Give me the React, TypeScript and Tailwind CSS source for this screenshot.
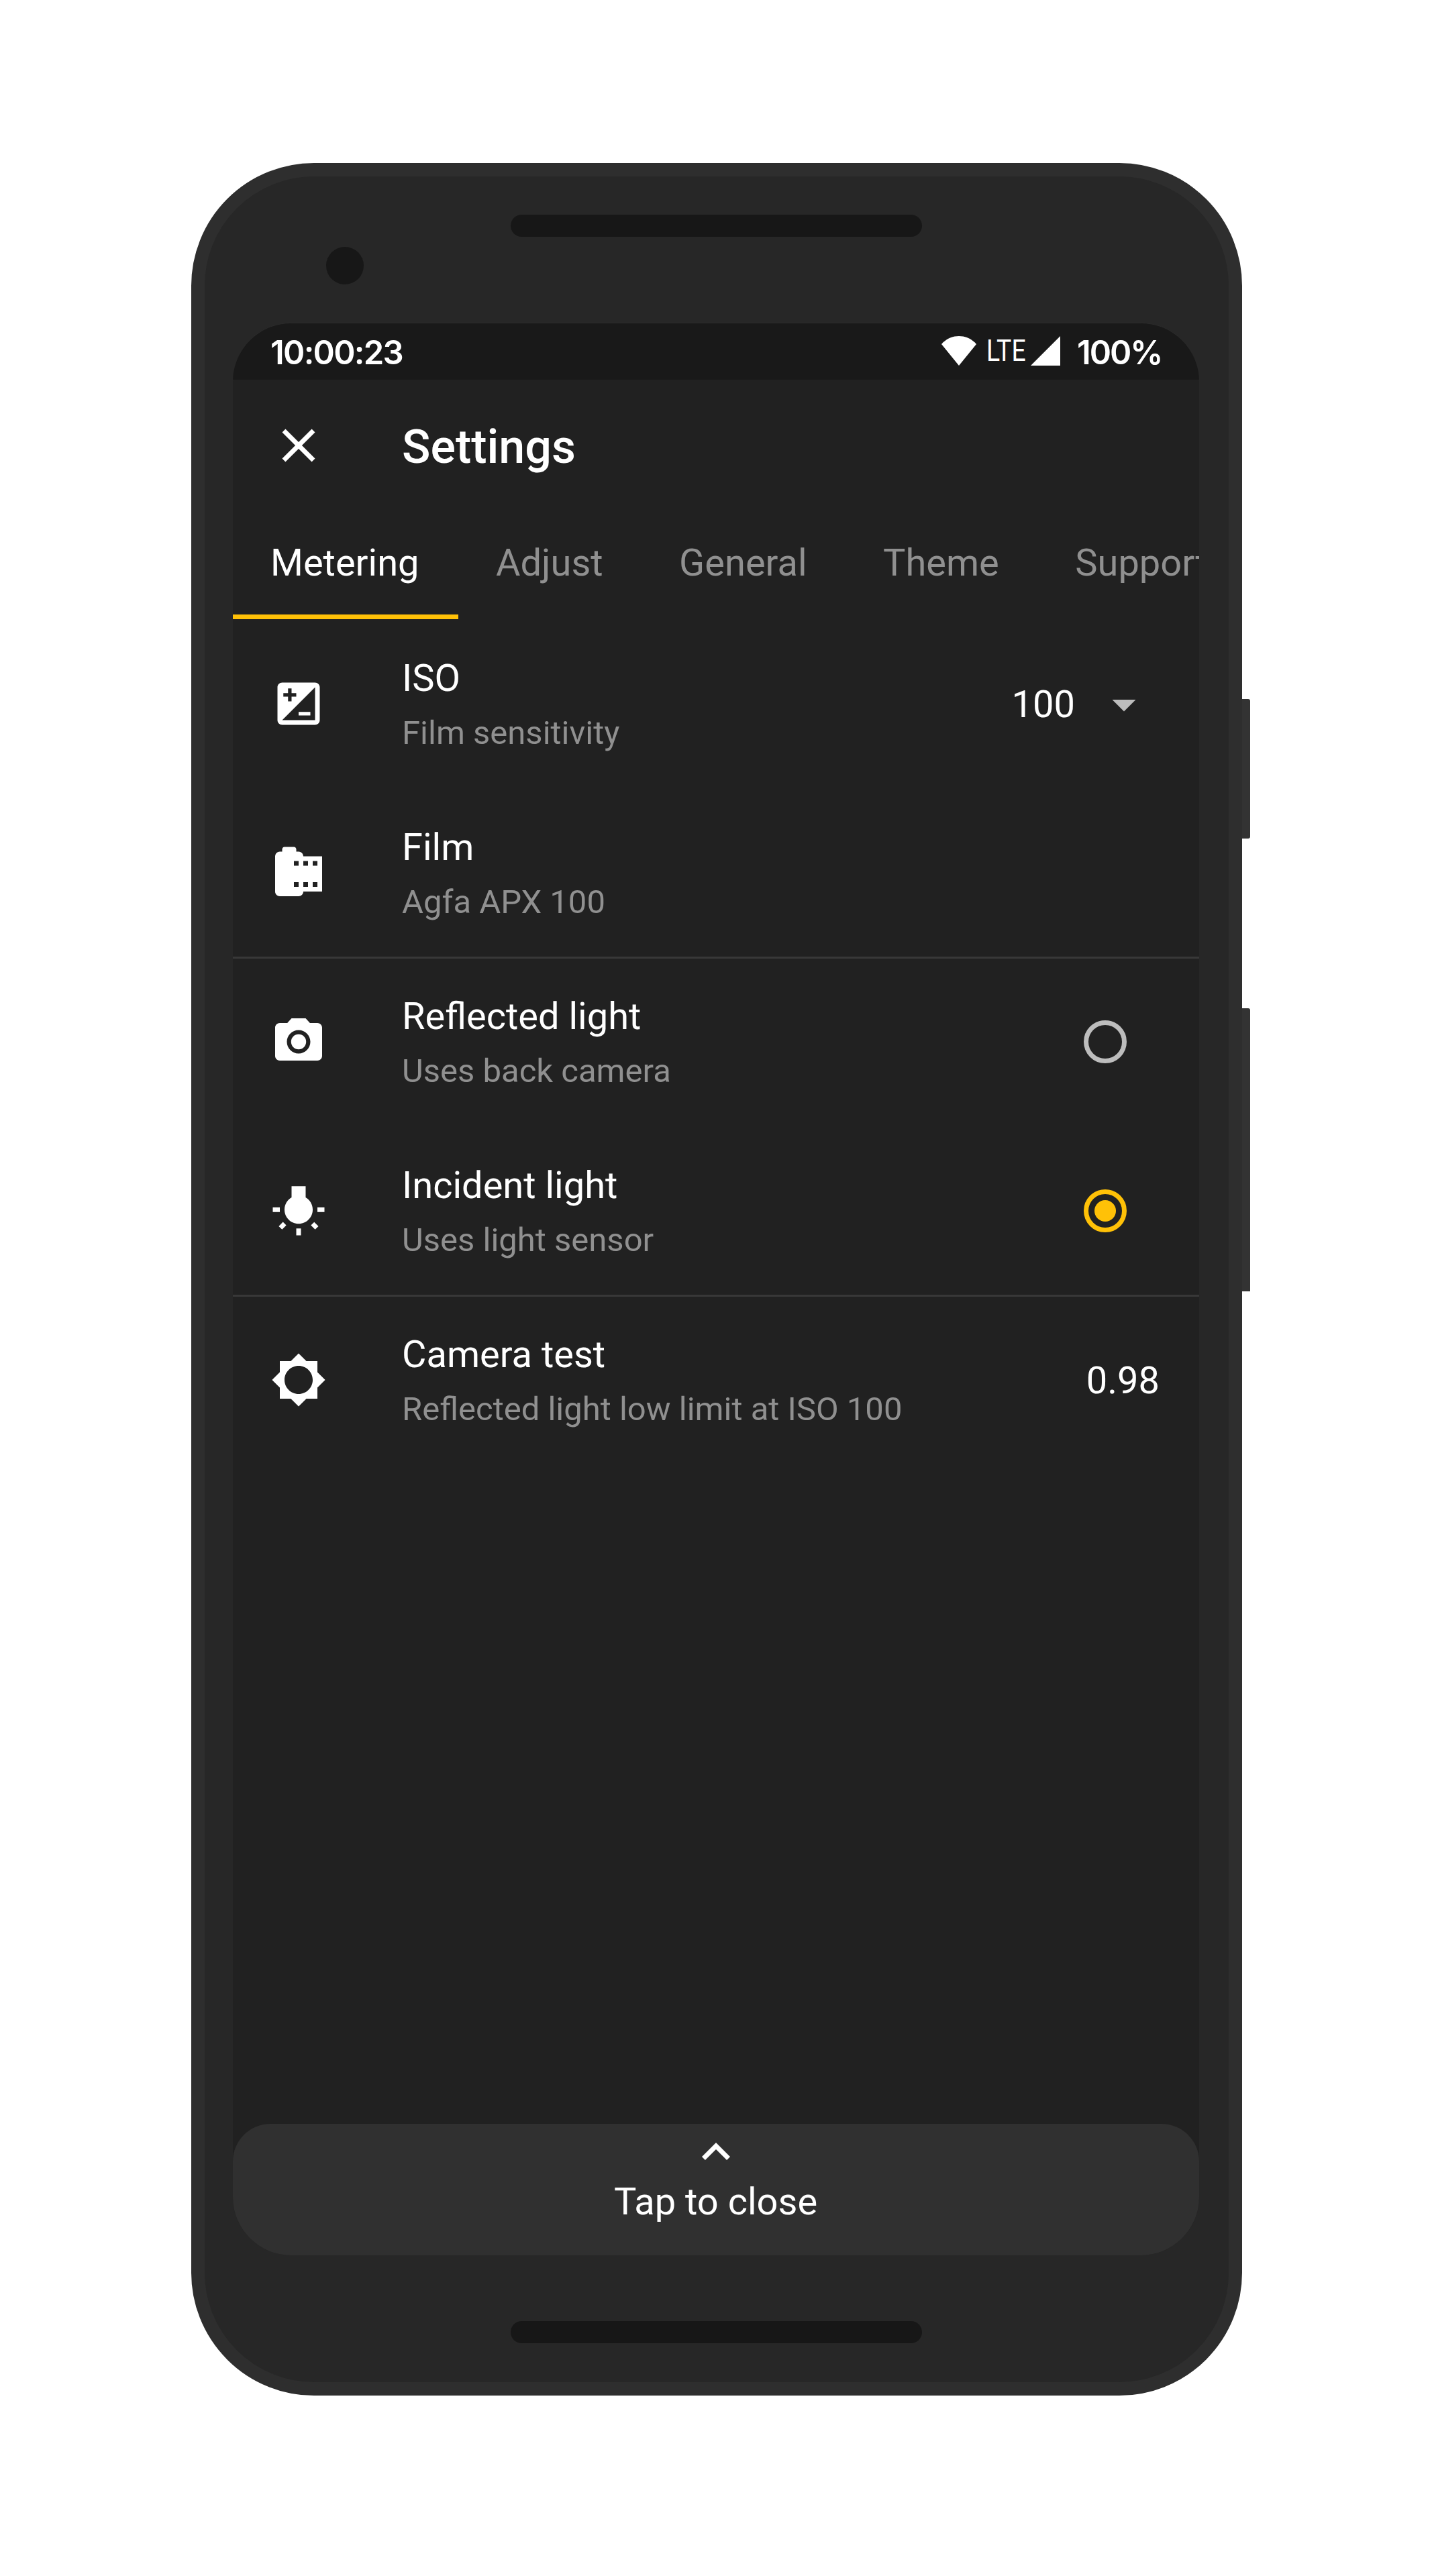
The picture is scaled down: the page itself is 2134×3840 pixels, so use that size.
import type { ReactNode } from "react";
import type { IconType } from "react-icons";
import {
  MdArrowDropDown,
  MdBrightness5,
  MdCameraRoll,
  MdClose,
  MdExpandLess,
  MdIso,
  MdPhotoCamera,
  MdWbIncandescent,
} from "react-icons/md";

const tabs = ["Metering", "Adjust", "General", "Theme", "Support"];

function StatusBar() {
  return (
    <div className="flex h-[84px] items-center bg-[#191919] pr-[56px] pl-[56px] font-['Inter',sans-serif] text-[49px] font-[560]">
      <span className="w-[220px] pt-[4px] leading-[80px] tracking-[-1.7px]">10:00:23</span>
      <svg className="mt-[-2px] ml-auto h-[44px] w-[52px]" viewBox="0 0 52 44" fill="currentColor">
        <path d="M26 0C16 0 7 4 0 12l26 32 26-32C45 4 36 0 26 0z" />
      </svg>
      <span className="ml-[15px] w-[62px] origin-left scale-x-[0.85] pb-[3px] font-['Roboto',sans-serif] text-[44px] leading-[76px] font-normal">
        LTE
      </span>
      <svg className="mt-[-2px] ml-[4px] h-[44px] w-[44px]" viewBox="0 0 44 44" fill="currentColor">
        <path d="M44 0v44H0z" />
      </svg>
      <span className="w-[151px] pt-[4px] pl-[25px] leading-[80px] tracking-[-2px]">100%</span>
    </div>
  );
}

function Radio({ checked = false }: { checked?: boolean }) {
  return (
    <span
      className={
        checked
          ? "mr-[52px] mb-[2px] flex size-[64px] items-center justify-center rounded-full border-[7px] border-[#ffc107]"
          : "mr-[52px] mb-[2px] flex size-[64px] rounded-full border-[7px] border-[#bdbdbd]"
      }
    >
      {checked && <span className="size-[32px] rounded-full bg-[#ffc107]" />}
    </span>
  );
}

function Row({ icon: Icon, title, note, children }: { icon: IconType; title: string; note: string; children?: ReactNode }) {
  return (
    <div className="flex h-[252px] items-center pr-[56px] pl-[56px]">
      <Icon className="mb-[2px] size-[84px] shrink-0" />
      <div className="ml-[112px] flex flex-1 flex-col">
        <span className="text-[56px] leading-[84px]">{title}</span>
        <span className="mt-[2px] text-[49px] leading-[76px] text-[#909090]">{note}</span>
      </div>
      {children}
    </div>
  );
}

function Divider() {
  return <div className="-mt-[2px] -mb-px h-[3px] bg-[#383838]" />;
}

export default function App() {
  return (
    <div className="flex h-[3840px] w-[2134px] items-start bg-white pt-[243px] pl-[285px] font-['Roboto',sans-serif] text-white">
      <div className="flex h-[3328px] w-[1566px] shrink-0 flex-col items-center rounded-[183px] border-[20px] border-[#2e2e2e] bg-[#272727]">
        <div className="mt-[57px] mr-px h-[33px] w-[613px] rounded-full bg-[#171717]" />
        <div className="mt-[15px] mr-auto ml-[181px] size-[56px] rounded-full bg-[#171717]" />

        <div className="mt-[58px] mr-[2px] flex h-[2880px] w-[1440px] shrink-0 flex-col overflow-hidden rounded-[87px] bg-[#212121] shadow-[0_-1px_0_#2c2c2c]">
          <StatusBar />
          <header className="flex h-[196px] items-center pl-[56px]">
            <MdClose className="size-[84px]" />
            <h1 className="mt-[4px] ml-[112px] text-[70px] leading-[84px] font-medium">Settings</h1>
          </header>

          <nav className="flex h-[161px] text-[56px]">
            {tabs.map((tab, i) => (
              <div
                key={tab}
                className={
                  i === 0
                    ? "w-[336px] shrink-0 border-b-[7px] border-[#ffc107] pt-[44px] pl-[56px] leading-[66px]"
                    : "shrink-0 pt-[44px] pr-[57.5px] pl-[56px] leading-[66px] text-[#909090]"
                }
              >
                {tab}
              </div>
            ))}
          </nav>

          <main className="flex flex-1 flex-col pt-px">
            <Row icon={MdIso} title="ISO" note="Film sensitivity">
              <span className="text-[56px]">100</span>
              <MdArrowDropDown className="mr-[14px] mb-px ml-[31px] size-[84px] text-[#bdbdbd]" />
            </Row>
            <Row icon={MdCameraRoll} title="Film" note="Agfa APX 100" />
            <Divider />
            <Row icon={MdPhotoCamera} title="Reflected light" note="Uses back camera">
              <Radio />
            </Row>
            <Row icon={MdWbIncandescent} title="Incident light" note="Uses light sensor">
              <Radio checked />
            </Row>
            <Divider />
            <Row icon={MdBrightness5} title="Camera test" note="Reflected light low limit at ISO 100">
              <span className="mr-[3px] text-[56px]">0.98</span>
            </Row>
          </main>

          <footer className="flex h-[196px] shrink-0 flex-col items-center rounded-t-[56px] bg-[#303030]">
            <MdExpandLess className="size-[84px]" />
            <span className="-mt-px mr-px text-[56px] leading-[66px]">Tap to close</span>
          </footer>
        </div>

        <div className="mt-[98px] mr-px h-[33px] w-[613px] rounded-full bg-[#171717]" />
      </div>

      <div className="flex flex-col pt-[799px]">
        <div className="h-[208px] w-[12px] rounded-r-[3px] bg-[#333333]" />
        <div className="mt-[253px] h-[422px] w-[12px] rounded-tr-[3px] bg-[#333333]" />
      </div>
    </div>
  );
}
